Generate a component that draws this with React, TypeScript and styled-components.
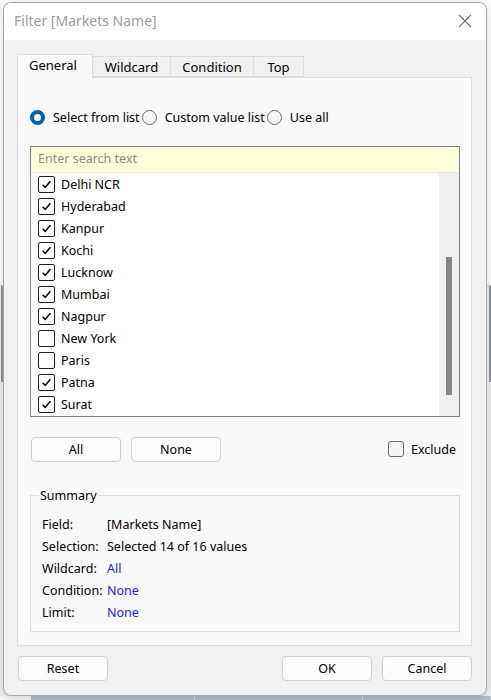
import React from "react";
import styled, { createGlobalStyle } from "styled-components";

const GlobalStyle = createGlobalStyle`
  html, body { margin: 0; padding: 0; }
  body {
    width: 491px;
    height: 700px;
    overflow: hidden;
    font-family: "Noto Sans", "Open Sans", sans-serif;
    font-size: 12px;
    color: #000;
    background: #f4f4f4;
  }
`;

const Page = styled.div`
  position: relative;
  width: 491px;
  height: 700px;
  overflow: hidden;
  background: #f4f4f4;
  display: flex;
  flex-direction: column;
`;

const BackdropTop = styled.div`
  height: 285px;
  border-bottom: 1px solid #c8c8c8;
  background: #fafafa;
`;

const BackdropMiddle = styled.div`
  flex: 1;
  display: flex;
  justify-content: space-between;
  padding: 0 0 0 1px;
  background: #ececec;
`;

const BackdropRule = styled.div`
  width: 2px;
  height: 96px;
  background: #8a8f96;
`;

const BackdropRow = styled.div`
  height: 22px;
  margin: 0 0 -18px 31px;
  display: grid;
  grid-template-columns: 164px 168px 1fr;
  background: #a9bed1;
  font-size: 14px;
  color: #222;
`;

const BackdropCell = styled.div`
  padding: 0 0 0 17px;
  border-right: 1px solid #c6d2de;
  line-height: 27px;
  white-space: nowrap;
`;

const Dialog = styled.div`
  position: absolute;
  left: 3px;
  top: 2px;
  width: 482px;
  height: 692px;
  border: 1px solid #a6a6a6;
  border-radius: 8px;
  background: #f0f0f0;
  overflow: hidden;
  display: flex;
  flex-direction: column;
  box-shadow: 0 2px 6px rgba(0, 0, 0, 0.12);
`;

const TitleBar = styled.div`
  height: 37px;
  background: #ffffff;
  display: flex;
  align-items: center;
  justify-content: space-between;
  padding: 0 14px 0 10px;
  flex-shrink: 0;
`;

const Title = styled.div`
  font-size: 14px;
  color: #9b9b9b;
  margin-top: -2px;
`;

const CloseButton = styled.div`
  width: 14px;
  height: 14px;
  display: flex;
  margin-top: -2px;
`;

const Body = styled.div`
  padding: 13px 14px 0 13px;
  display: flex;
  flex-direction: column;
`;

const TabStrip = styled.div`
  display: flex;
  align-items: flex-end;
  height: 24px;
  position: relative;
  z-index: 1;
`;

const Tab = styled.div<{ $active?: boolean; $w: number }>`
  width: ${(p) => p.$w}px;
  height: ${(p) => (p.$active ? 24 : 21)}px;
  box-sizing: border-box;
  border: 1px solid #dcdcdc;
  border-bottom: ${(p) => (p.$active ? "none" : "1px solid #dcdcdc")};
  border-left: ${(p) => (p.$active ? "1px solid #dcdcdc" : "none")};
  background: ${(p) => (p.$active ? "#f9f9f9" : "#f0f0f0")};
  display: flex;
  align-items: center;
  justify-content: center;
  font-size: 13px;
  padding-bottom: ${(p) => (p.$active ? 3 : 0)}px;
  margin-bottom: ${(p) => (p.$active ? -1 : 0)}px;
  ${(p) => (p.$active ? "padding-right: 4px;" : "")}
`;

const Panel = styled.div`
  width: 455px;
  height: 569px;
  box-sizing: border-box;
  border: 1px solid #dcdcdc;
  background: #f9f9f9;
  padding: 31px 11px 0 12px;
  display: flex;
  flex-direction: column;
`;

const RadioRow = styled.div`
  display: flex;
  align-items: center;
  height: 16px;
`;

const RadioOption = styled.label`
  display: flex;
  align-items: center;
  gap: 8px;
  margin-right: 2px;
  font-size: 12.5px;
  white-space: nowrap;
`;

const RadioCircle = styled.span<{ $on?: boolean }>`
  width: 15px;
  height: 15px;
  box-sizing: border-box;
  border-radius: 50%;
  flex-shrink: 0;
  display: flex;
  align-items: center;
  justify-content: center;
  background: ${(p) => (p.$on ? "#005fb8" : "#f6f6f6")};
  border: ${(p) => (p.$on ? "none" : "1px solid #6c6c6c")};
  &::after {
    content: "";
    display: ${(p) => (p.$on ? "block" : "none")};
    width: 7px;
    height: 7px;
    border-radius: 50%;
    background: #fff;
  }
`;

const ListBox = styled.div`
  margin-top: 21px;
  width: 430px;
  height: 271px;
  box-sizing: border-box;
  border: 1px solid #7d7f86;
  display: flex;
  flex-direction: column;
  background: #fff;
`;

const SearchField = styled.div`
  height: 26px;
  flex-shrink: 0;
  box-sizing: border-box;
  background: #ffffdc;
  border-bottom: 1px solid #e6e6e6;
  color: #8a8a8a;
  font-size: 12.5px;
  padding-left: 7px;
  display: flex;
  align-items: center;
  padding-bottom: 2px;
`;

const ListArea = styled.div`
  flex: 1;
  display: flex;
  min-height: 0;
`;

const Items = styled.div`
  flex: 1;
  padding-left: 7px;
  display: flex;
  flex-direction: column;
`;

const Item = styled.div`
  height: 22px;
  display: flex;
  align-items: center;
  gap: 6px;
  font-size: 12.5px;
`;

const CheckBox = styled.span`
  width: 17px;
  height: 17px;
  box-sizing: border-box;
  border: 1px solid #1e1e1e;
  border-radius: 2px;
  background: #fff;
  display: flex;
  align-items: center;
  justify-content: center;
  flex-shrink: 0;
`;

const ScrollTrack = styled.div`
  width: 20px;
  background: #efefef;
  display: flex;
  justify-content: center;
  padding-top: 84px;
  box-sizing: border-box;
`;

const ScrollThumb = styled.div`
  width: 6px;
  height: 138px;
  background: #858585;
`;

const ButtonRow = styled.div`
  margin-top: 19px;
  display: flex;
  align-items: center;
  height: 26px;
  padding-left: 1px;
`;

const Button = styled.div<{ $w?: number }>`
  width: ${(p) => p.$w ?? 90}px;
  height: 25px;
  box-sizing: border-box;
  border: 1px solid #d0d0d0;
  border-radius: 4px;
  background: #fdfdfd;
  display: flex;
  align-items: center;
  justify-content: center;
  font-size: 12.5px;
  margin-right: 10px;
  &:last-child {
    margin-right: 0;
  }
`;

const Spacer = styled.div`
  flex: 1;
`;

const ExcludeLabel = styled.label`
  display: flex;
  align-items: center;
  gap: 7px;
  font-size: 12.5px;
  margin-right: 4px;
`;

const ExcludeBox = styled.span`
  width: 16px;
  height: 16px;
  box-sizing: border-box;
  border: 1px solid #6a6a6a;
  border-radius: 3px;
  background: #f5f5f5;
`;

const Summary = styled.fieldset`
  margin: 25px 0 0 0;
  width: 430px;
  height: 145px;
  box-sizing: border-box;
  border: 1px solid #dcdcdc;
  padding: 9px 0 0 11px;
  display: grid;
  grid-template-columns: 65px 1fr;
  grid-auto-rows: 22px;
  align-content: start;
  align-items: center;
`;

const Legend = styled.legend`
  padding: 0 1px;
  margin-left: -3px;
  font-size: 12.5px;
`;

const Label = styled.div`
  font-size: 12.5px;
`;

const Value = styled.div<{ $link?: boolean }>`
  font-size: 12.5px;
  color: ${(p) => (p.$link ? "#1a1aff" : "#000")};
`;

const Footer = styled.div`
  display: flex;
  align-items: center;
  padding: 10px 14px 0 14px;
`;

const Check = () => (
  <svg width="13" height="13" viewBox="0 0 13 13">
    <path d="M2.6 6.8 L5.2 9.4 L10.4 3.2" fill="none" stroke="#000" strokeWidth="1.6" />
  </svg>
);

const items: [string, boolean][] = [
  ["Delhi NCR", true],
  ["Hyderabad", true],
  ["Kanpur", true],
  ["Kochi", true],
  ["Lucknow", true],
  ["Mumbai", true],
  ["Nagpur", true],
  ["New York", false],
  ["Paris", false],
  ["Patna", true],
  ["Surat", true],
];

const summary: [string, string, boolean][] = [
  ["Field:", "[Markets Name]", false],
  ["Selection:", "Selected 14 of 16 values", false],
  ["Wildcard:", "All", true],
  ["Condition:", "None", true],
  ["Limit:", "None", true],
];

export default function App() {
  return (
    <>
      <GlobalStyle />
      <Page>
        <BackdropTop />
        <BackdropMiddle>
          <BackdropRule />
          <BackdropRule />
        </BackdropMiddle>
        <BackdropRow>
          <BackdropCell>Mark005</BackdropCell>
          <BackdropCell>Kanpur</BackdropCell>
          <BackdropCell>North</BackdropCell>
        </BackdropRow>
        <Dialog>
          <TitleBar>
            <Title>Filter [Markets Name]</Title>
            <CloseButton>
              <svg width="14" height="14" viewBox="0 0 14 14">
                <path d="M1 1 L13 13 M13 1 L1 13" stroke="#707070" strokeWidth="1.1" fill="none" />
              </svg>
            </CloseButton>
          </TitleBar>
          <Body>
            <TabStrip>
              <Tab $active $w={76}>General</Tab>
              <Tab $w={78}>Wildcard</Tab>
              <Tab $w={83}>Condition</Tab>
              <Tab $w={50}>Top</Tab>
            </TabStrip>
            <Panel>
              <RadioRow>
                <RadioOption>
                  <RadioCircle $on />
                  Select from list
                </RadioOption>
                <RadioOption>
                  <RadioCircle />
                  Custom value list
                </RadioOption>
                <RadioOption>
                  <RadioCircle />
                  Use all
                </RadioOption>
              </RadioRow>
              <ListBox>
                <SearchField>Enter search text</SearchField>
                <ListArea>
                  <Items>
                    {items.map(([name, on]) => (
                      <Item key={name}>
                        <CheckBox>{on && <Check />}</CheckBox>
                        {name}
                      </Item>
                    ))}
                  </Items>
                  <ScrollTrack>
                    <ScrollThumb />
                  </ScrollTrack>
                </ListArea>
              </ListBox>
              <ButtonRow>
                <Button>All</Button>
                <Button>None</Button>
                <Spacer />
                <ExcludeLabel>
                  <ExcludeBox />
                  Exclude
                </ExcludeLabel>
              </ButtonRow>
              <Summary>
                <Legend>Summary</Legend>
                {summary.map(([l, v, link]) => (
                  <React.Fragment key={l}>
                    <Label>{l}</Label>
                    <Value $link={link}>{v}</Value>
                  </React.Fragment>
                ))}
              </Summary>
            </Panel>
          </Body>
          <Footer>
            <Button>Reset</Button>
            <Spacer />
            <Button>OK</Button>
            <Button>Cancel</Button>
          </Footer>
        </Dialog>
      </Page>
    </>
  );
}
